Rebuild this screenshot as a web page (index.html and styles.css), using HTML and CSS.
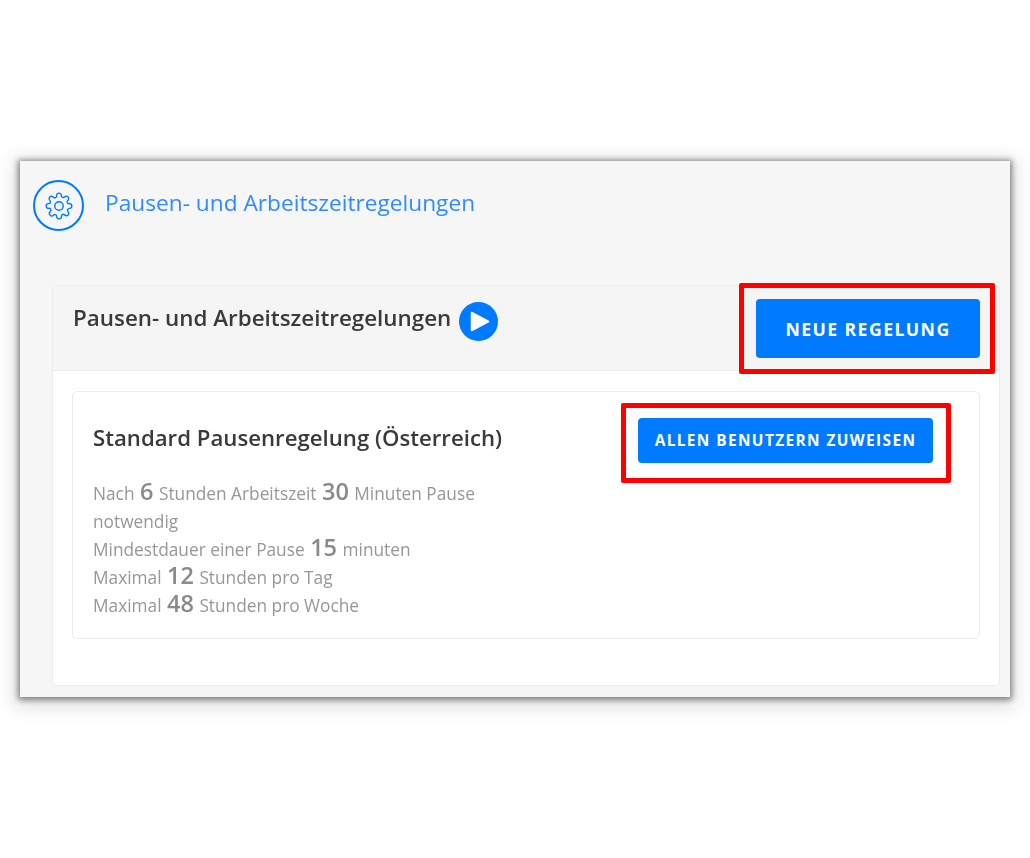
FILE: index.html
```html
<!DOCTYPE html>
<html lang="de">
<head>
    <meta charset="UTF-8">
    <meta name="viewport" content="width=device-width, initial-scale=1.0">
    <title>Pausen- und Arbeitszeitregelungen</title>
    <link rel="stylesheet" href="styles.css">
</head>
<body>
    <div class="frame">
        <div class="page-head">
            <div class="page-icon">
                <svg width="28" height="28" viewBox="0 0 24 24" fill="none" stroke="#007bff" stroke-width="1.2" stroke-linecap="round" stroke-linejoin="round">
                    <circle cx="12" cy="12" r="3.6"></circle>
                    <path d="M19.4 15a1.65 1.65 0 0 0 .33 1.82l.06.06a2 2 0 1 1-2.83 2.83l-.06-.06a1.65 1.65 0 0 0-2.82 1.17V21a2 2 0 0 1-4 0v-.09a1.65 1.65 0 0 0-2.82-1.12l-.06.06a2 2 0 1 1-2.83-2.83l.06-.06A1.65 1.65 0 0 0 3.09 14H3a2 2 0 0 1 0-4h.09a1.65 1.65 0 0 0 1.12-2.82l-.06-.06a2 2 0 1 1 2.83-2.83l.06.06A1.65 1.65 0 0 0 10 3.09V3a2 2 0 0 1 4 0v.09a1.65 1.65 0 0 0 2.82 1.12l.06-.06a2 2 0 1 1 2.83 2.83l-.06.06A1.65 1.65 0 0 0 20.91 10H21a2 2 0 0 1 0 4h-.09a1.65 1.65 0 0 0-1.51 1z"></path>
                </svg>
            </div>
            <span class="page-title">Pausen- und Arbeitszeitregelungen</span>
        </div>

        <div class="card">
            <div class="card-head">
                <div class="card-title">
                    <h2>Pausen- und Arbeitszeitregelungen</h2>
                    <svg class="play" width="39" height="39" viewBox="0 0 39 39">
                        <circle cx="19.5" cy="19.5" r="19.5" fill="#007bff"></circle>
                        <path d="M13 11 L29 19.5 L13 28 Z" fill="#fff" stroke="#fff" stroke-width="2.5" stroke-linejoin="round"></path>
                    </svg>
                </div>
                <div class="marked marked-big">
                    <button class="btn btn-big">NEUE REGELUNG</button>
                </div>
            </div>
            <div class="card-body">
                <div class="rule">
                    <div class="rule-text">
                        <h3>Standard Pausenregelung (Österreich)</h3>
                        <p>Nach <b>6</b> Stunden Arbeitszeit <b>30</b> Minuten Pause notwendig</p>
                        <p>Mindestdauer einer Pause <b>15</b> minuten</p>
                        <p>Maximal <b>12</b> Stunden pro Tag</p>
                        <p>Maximal <b>48</b> Stunden pro Woche</p>
                    </div>
                    <div class="marked marked-small">
                        <button class="btn btn-small">ALLEN BENUTZERN ZUWEISEN</button>
                    </div>
                </div>
            </div>
        </div>
    </div>
</body>
</html>
```

FILE: styles.css
```css
html, body {
    height: 100%;
}
body {
    box-sizing: border-box;
    margin: 0;
    padding: 161px 0 0 20px;
    background: #fff;
    font-family: 'Open Sans', sans-serif;
}
.frame {
    box-sizing: border-box;
    width: 990px;
    height: 536px;
    padding: 19px 10px 0 13px;
    background: #f6f6f6;
    box-shadow: 0 1px 6px 2px rgba(0, 0, 0, 0.45), 0 4px 18px 6px rgba(0, 0, 0, 0.12);
    filter: blur(0.4px);
}
.page-head {
    display: flex;
    align-items: center;
    height: 51px;
    gap: 21px;
}
.page-icon {
    box-sizing: border-box;
    width: 51px;
    height: 51px;
    border: 2px solid #007bff;
    border-radius: 50%;
    display: flex;
    align-items: center;
    justify-content: center;
}
.page-title {
    font-size: 22.7px;
    color: #2f8cff;
    margin-top: -7px;
}
.card {
    box-sizing: border-box;
    height: 401px;
    margin: 54px 0 0 19px;
    background: #fff;
    border: 1px solid #ececec;
    border-radius: 5px;
}
.card-head {
    box-sizing: border-box;
    height: 85px;
    padding: 1px 19px 0 20px;
    display: flex;
    justify-content: space-between;
    align-items: center;
    background: #f5f5f5;
    border-bottom: 1px solid #ececec;
    border-radius: 5px 5px 0 0;
}
.card-title {
    display: flex;
    align-items: center;
    gap: 8px;
    margin-top: -14px;
}
h2 {
    margin: -8px 0 0;
    font-size: 22.4px;
    font-weight: 600;
    color: #3a3a3a;
}
.card-body {
    padding: 20px 19px 0;
}
.rule {
    box-sizing: border-box;
    height: 248px;
    padding: 26px 46px 0 20px;
    display: flex;
    justify-content: space-between;
    align-items: flex-start;
    border: 1px solid #ececec;
    border-radius: 5px;
}
.rule-text {
    width: 420px;
}
h3 {
    margin: 4px 0 27px;
    font-size: 22.2px;
    font-weight: 600;
    color: #3a3a3a;
}
p {
    margin: 0;
    font-size: 17.3px;
    line-height: 28px;
    color: #979799;
}
p b {
    margin: 0 1px;
    font-size: 23.5px;
    line-height: 1;
    font-weight: 600;
    color: #8a8a8c;
}
.btn {
    display: block;
    background: #007bff;
    color: #fff;
    border: none;
    border-radius: 4px;
    font-family: inherit;
    font-weight: 700;
    letter-spacing: 1.4px;
}
.btn-big {
    width: 224px;
    height: 59px;
    font-size: 17.7px;
}
.btn-small {
    width: 295px;
    height: 45px;
    font-size: 15.4px;
}
/* red annotation boxes drawn around the buttons */
.marked {
    position: relative;
}
.marked::after {
    content: "";
    position: absolute;
    border: 5px solid #f00;
    border-radius: 2px;
}
.marked-big::after {
    left: -17px;
    right: -15px;
    top: -16px;
    bottom: -16px;
}
.marked-small::after {
    left: -17px;
    right: -18px;
    top: -15px;
    bottom: -20px;
}
```
